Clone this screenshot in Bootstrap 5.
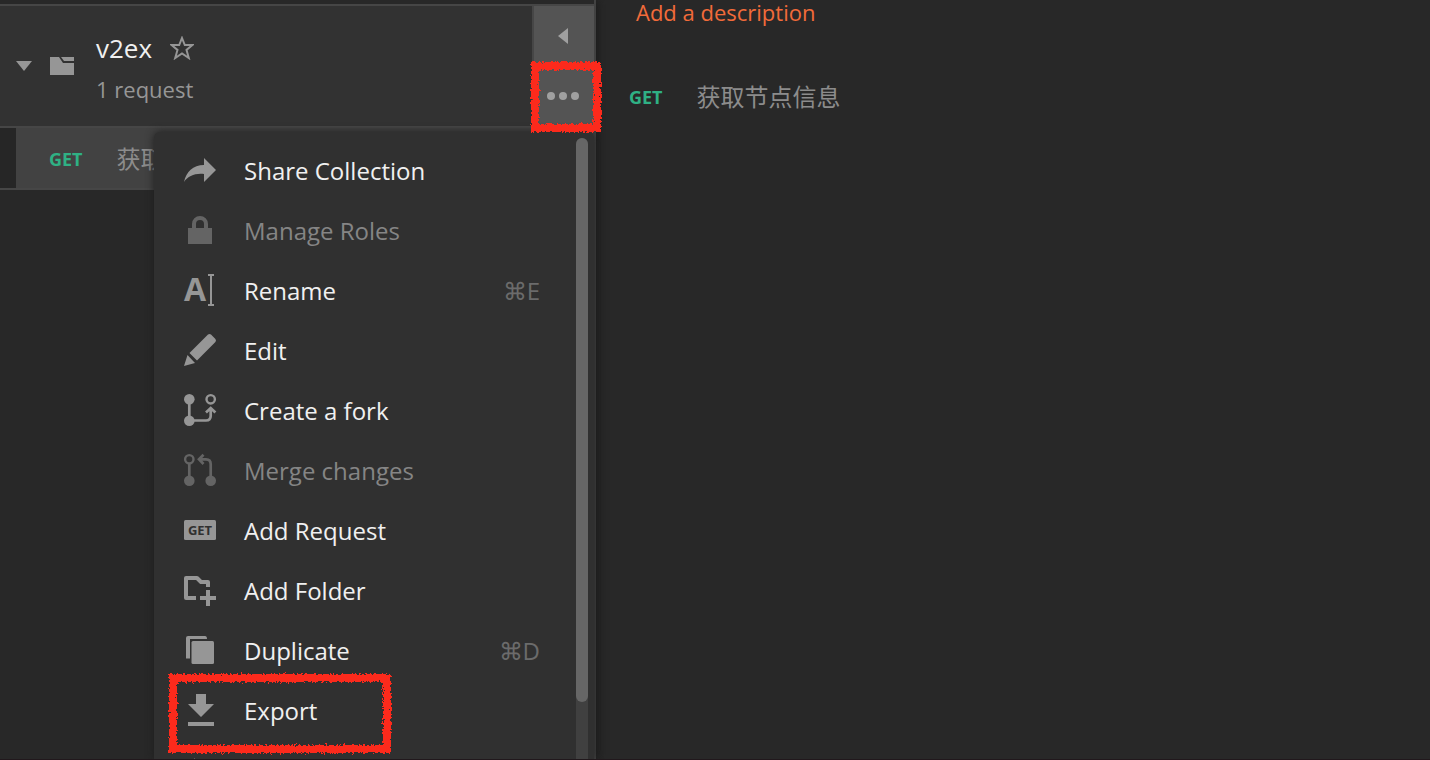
<!DOCTYPE html>
<html lang="en">
<head>
<meta charset="utf-8">
<meta name="viewport" content="width=device-width, initial-scale=1">
<title>v2ex</title>
<link rel="stylesheet" href="https://cdn.jsdelivr.net/npm/bootstrap@5.3.0/dist/css/bootstrap.min.css">
<style>
body{background:#282828;color:#f0f0f0;font-family:"Open Sans","Noto Sans CJK SC",sans-serif;font-size:24px;line-height:32px;border-bottom:1px solid #21181c}
button{color:inherit}
.app-side{width:596px;border-right:2px solid #424242;box-shadow:2px 0 8px #1c1c1c;z-index:1}
.coll-top{height:6px;border-bottom:2px solid #464646}
.coll-head{height:122px;background:#323232;border-bottom:2px solid #464646}
.coll-info{gap:18px;padding-left:16px}
.coll-title{padding:4px 0 0 4px}
.coll-name{gap:18px;font-size:26px;line-height:34px}
.soft-text{color:#969696}
.coll-count{font-size:22px;margin-top:8px}
.coll-tools{width:62px;border-left:2px solid #464646;background:#545454}
.tool-btn{height:60px;border:0;background:#545454;padding:0 2px 0 0}
.req-wrap{background:#262626;border-bottom:2px solid #464646}
.req-row{height:60px;margin-left:16px;padding:2px 0 0 33px;gap:34px;background:#424242}
.verb{color:#2fb184;font-weight:700;font-size:18px}
.zh-text{color:#8c8c8c}
.main-link{color:#f26b3a;font-size:22px;text-decoration:none}
.main-pane{padding-left:33px}
.main-desc{padding-left:7px;line-height:24px}
.main-req{margin-top:57px;gap:34px}
.pop-menu{top:132px;left:154px;right:0;bottom:0;background:#303030;border-radius:6px 6px 0 0;box-shadow:0 0 8px #1e1e1e;padding:9px 0 0}
.pop-item{height:60px;padding:0 54px 0 30px;gap:28px;background:none;border:0;width:100%}
.pop-item svg{width:32px;height:32px;flex:none;fill:#969696;margin-bottom:2px;overflow:visible;--ic:#969696}
.pop-item:disabled{color:#858585}
.pop-item:disabled svg{fill:#646464;--ic:#646464}
.stroked{fill:none;stroke:var(--ic)}
.short-key{color:#6b6b6b}
.short-key span{font-family:"DejaVu Sans",sans-serif;font-weight:200}
.bar-track{right:6px;top:6px;bottom:0;width:12px;background:#404040;border-radius:6px 6px 0 0}
.bar-thumb{height:564px;background:#666;border-radius:6px}
.red-mark{pointer-events:none;overflow:visible}
.red-mark rect{fill:none;stroke:#fc2a1c;stroke-width:8px;filter:url(#crayon)}
.mark-more{left:530px;top:61px;width:72px;height:72px;z-index:5}
.mark-export{left:168px;top:674px;width:224px;height:80px;z-index:5}
</style>
</head>
<body class="vh-100 overflow-hidden">
<div class="d-flex h-100 position-relative">
  <aside class="app-side flex-shrink-0 position-relative">
    <div class="coll-top"></div>
    <div class="coll-head d-flex">
      <div class="coll-info d-flex align-items-center flex-grow-1">
        <svg width="16" height="10" viewBox="0 0 16 10" fill="#969696"><path d="M0 0h16L8 10z"/></svg>
        <svg width="24" height="18" viewBox="0 0 24 18" fill="#969696" class="flex-shrink-0"><path d="M0 0h9l4 6h11v12H0zM11 0h13v4H14z"/></svg>
        <div class="coll-title">
          <div class="coll-name d-flex align-items-center"><span>v2ex</span>
            <svg width="24" height="24" viewBox="0 0 24 24" fill="none" stroke="#969696" stroke-width="2"><path d="M12 2l2.800 7h7.700l-6 4.900 2.300 8.100-6.800-4.600L5.200 22l2.300-8.100-6-4.900h7.700z"/></svg></div>
          <div class="coll-count soft-text">1 request</div>
        </div>
      </div>
      <div class="coll-tools d-flex flex-column">
        <button class="tool-btn" aria-label="Collapse"><svg width="10" height="16" viewBox="0 0 10 16" fill="#a0a0a0" class="d-block mx-auto"><path d="M10 0v16L0 8z"/></svg></button>
        <button class="tool-btn" aria-label="More actions"><svg width="32" height="8" viewBox="0 0 32 8" fill="#a0a0a0" class="d-block mx-auto"><circle cx="4" cy="4" r="4"/><circle cx="16" cy="4" r="4"/><circle cx="28" cy="4" r="4"/></svg></button>
      </div>
    </div>
    <div class="req-wrap"><div class="req-row d-flex align-items-center"><span class="verb">GET</span><span class="zh-text">获取节点信息</span></div></div>

    <div class="pop-menu position-absolute overflow-hidden">
      <button class="pop-item d-flex align-items-center"><svg viewBox="0 0 32 32"><path d="M20 4l12 12-12 12v-8C11 19 4 22 0 28 2 18 9 11 20 11z"/></svg>Share Collection</button>
      <button class="pop-item d-flex align-items-center" disabled><svg viewBox="0 0 32 32"><path d="M4 14h4v-4a8 8 0 0 1 16 0v4h4v16H4zM12 14h8v-4a4 4 0 0 0-8 0z"/></svg>Manage Roles</button>
      <button class="pop-item d-flex align-items-center"><svg viewBox="0 0 32 32"><text x="0" y="27" font-size="32" font-weight="700">A</text><path d="M24 0h6v2h-2v28h2v2h-6v-2h2V2h-2z"/></svg>Rename<span class="short-key ms-auto"><span>⌘</span>E</span></button>
      <button class="pop-item d-flex align-items-center"><svg viewBox="0 0 32 32"><path d="M24 .6q1.500-1.200 3 0l4.400 4.400q1.200 1.500 0 3L13 26.500 5.500 19zM3.500 21l7.500 8L0 32z"/></svg>Edit</button>
      <button class="pop-item d-flex align-items-center"><svg viewBox="0 0 32 32"><circle cx="5.300" cy="5.300" r="5.300"/><circle cx="5.300" cy="26.700" r="5.300"/><circle class="stroked" cx="26.700" cy="5.300" r="4.200" stroke-width="2.400"/><path class="stroked" stroke-width="2.700" d="M5.300 5v21.500H22q4.700 0 4.700-4.700V14M22 18.500l4.700-4.500 4.700 4.500"/></svg>Create a fork</button>
      <button class="pop-item d-flex align-items-center" disabled><svg viewBox="0 0 32 32"><circle cx="5.300" cy="26.700" r="5.300"/><circle cx="26.700" cy="26.700" r="5.300"/><circle class="stroked" cx="5.300" cy="5.300" r="4.200" stroke-width="2.400"/><path class="stroked" stroke-width="2.700" d="M5.300 9.500V24M26.700 24V10q0-4.700-4.700-4.700h-7M19.500.8L15 5.300l4.500 4.700"/></svg>Merge changes</button>
      <button class="pop-item d-flex align-items-center"><svg viewBox="0 0 32 32"><rect y="6" width="32" height="20" rx="1.500"/><text x="16" y="21" text-anchor="middle" font-size="13" font-weight="700" fill="#303030">GET</text></svg>Add Request</button>
      <button class="pop-item d-flex align-items-center"><svg viewBox="0 0 32 32"><path class="stroked" stroke-width="4" stroke-linejoin="round" d="M12 24H2V4h11l4 4h7v5"/><path d="M22 16h4v6h6v4h-6v6h-4v-6h-6v-4h6z"/></svg>Add Folder</button>
      <button class="pop-item d-flex align-items-center"><svg viewBox="0 0 32 32"><path d="M2 24.500V4q0-2 2-2h17q2 0 2 3H6v19.500z"/><rect x="7.500" y="7" width="22.500" height="23" rx="1.500"/></svg>Duplicate<span class="short-key ms-auto"><span>⌘</span>D</span></button>
      <button class="pop-item d-flex align-items-center"><svg viewBox="0 0 32 32"><path d="M12 0h10v10h8L17 23 4 10h8zM4 28h26v4H4z"/></svg>Export</button>
      <button class="pop-item d-flex align-items-center" aria-label="Monitor Collection"><svg viewBox="0 0 32 32"><path d="M10.500 4l8 20 4-10H32v4h-7l-6 14-8-19-3 5H0v-4h6z"/></svg></button>
      <div class="bar-track position-absolute"><div class="bar-thumb"></div></div>
    </div>
  </aside>

  <main class="main-pane flex-grow-1">
    <div class="main-desc"><a href="#" class="main-link">Add a description</a></div>
    <div class="main-req d-flex align-items-center"><span class="verb">GET</span><span class="zh-text">获取节点信息</span></div>
  </main>

  <svg class="red-mark mark-more position-absolute" viewBox="0 0 72 72">
    <filter id="crayon" x="-10%" y="-10%" width="120%" height="120%"><feTurbulence type="fractalNoise" baseFrequency=".45" numOctaves="2" seed="4"/><feDisplacementMap in="SourceGraphic" scale="6" xChannelSelector="R" yChannelSelector="G"/></filter>
    <rect x="5" y="5" width="62" height="62"/></svg>
  <svg class="red-mark mark-export position-absolute" viewBox="0 0 224 80"><rect x="5" y="4" width="214" height="71"/></svg>
</div>
<script src="https://cdn.jsdelivr.net/npm/bootstrap@5.3.0/dist/js/bootstrap.bundle.min.js"></script>
</body>
</html>
